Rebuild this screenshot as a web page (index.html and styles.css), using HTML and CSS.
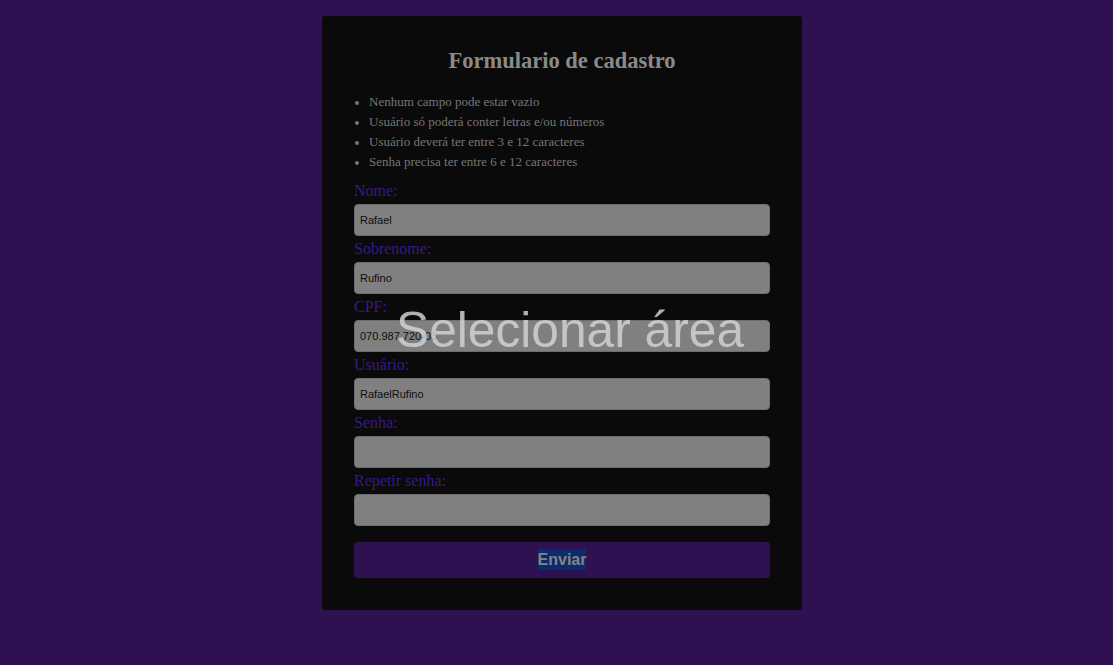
FILE: index.html
```html
<!DOCTYPE html>
<html lang="pt-BR">
<head>
<meta charset="utf-8">
<title>Formulario de cadastro</title>
<link rel="stylesheet" href="styles.css">
</head>
<body>
<main class="card">
  <h1 class="title">Formulario de cadastro</h1>
  <ul class="rules">
    <li>Nenhum campo pode estar vazio</li>
    <li>Usuário só poderá conter letras e/ou números</li>
    <li>Usuário deverá ter entre 3 e 12 caracteres</li>
    <li>Senha precisa ter entre 6 e 12 caracteres</li>
  </ul>
  <form class="form">
    <label class="label" for="nome">Nome:</label>
    <input class="field" id="nome" type="text" value="Rafael">
    <label class="label" for="sobrenome">Sobrenome:</label>
    <input class="field" id="sobrenome" type="text" value="Rufino">
    <label class="label" for="cpf">CPF:</label>
    <input class="field" id="cpf" type="text" value="070.987.720-03">
    <label class="label" for="usuario">Usuário:</label>
    <input class="field" id="usuario" type="text" value="RafaelRufino">
    <label class="label" for="senha">Senha:</label>
    <input class="field" id="senha" type="password" value="">
    <label class="label" for="repetir">Repetir senha:</label>
    <input class="field" id="repetir" type="password" value="">
    <button class="submit" type="button"><span class="selected">Enviar</span></button>
  </form>
</main>
<div class="overlay-text">Selecionar área</div>
</body>
</html>
```

FILE: styles.css
```css
html, body {
  margin: 0;
  padding: 0;
}
body {
  background: #2d1150;
  min-height: 665px;
  padding-left: 11px;
  box-sizing: border-box;
  font-family: "Liberation Serif", "Times New Roman", serif;
  position: relative;
}
.card {
  width: 416px;
  margin: 16px auto 0;
  padding: 32px;
  background: #0a0a0a;
  border-radius: 3px;
}
.title {
  margin: 0;
  text-align: center;
  font-size: 22.5px;
  line-height: 25px;
  font-weight: bold;
  color: #8a8a8a;
}
.rules {
  margin: 19px 0 10px;
  padding: 0 0 0 15px;
  color: #767676;
  font-size: 13px;
  line-height: 20px;
}
.rules li::marker {
  font-size: 12px;
}
.form {
  display: flex;
  flex-direction: column;
}
.label {
  display: block;
  margin: 4px 0 4px;
  font-size: 16px;
  line-height: 18px;
  color: #39178a;
}
.form .label:first-child {
  margin-top: 0;
}
.field {
  box-sizing: border-box;
  width: 416px;
  height: 32px;
  margin: 0;
  padding: 0 5px;
  background: #808080;
  border: 1px solid #6e6e6e;
  border-radius: 4px;
  font-family: "Liberation Sans", Arial, sans-serif;
  font-size: 11px;
  color: #0e0e0e;
  outline: none;
}
.submit {
  margin-top: 16px;
  height: 36px;
  width: 416px;
  border: none;
  border-radius: 4px;
  background: #2e1150;
  font-family: "Liberation Sans", Arial, sans-serif;
  font-size: 16px;
  font-weight: bold;
  color: #848484;
  padding: 0;
}
.selected {
  background: #0b2b6c;
  padding: 2px 0;
}
.overlay-text {
  position: absolute;
  left: 396px;
  top: 305px;
  font-family: "Liberation Sans", Arial, sans-serif;
  font-size: 49.7px;
  line-height: 50px;
  color: rgba(210, 210, 210, 0.84);
  white-space: nowrap;
  pointer-events: none;
}
```
